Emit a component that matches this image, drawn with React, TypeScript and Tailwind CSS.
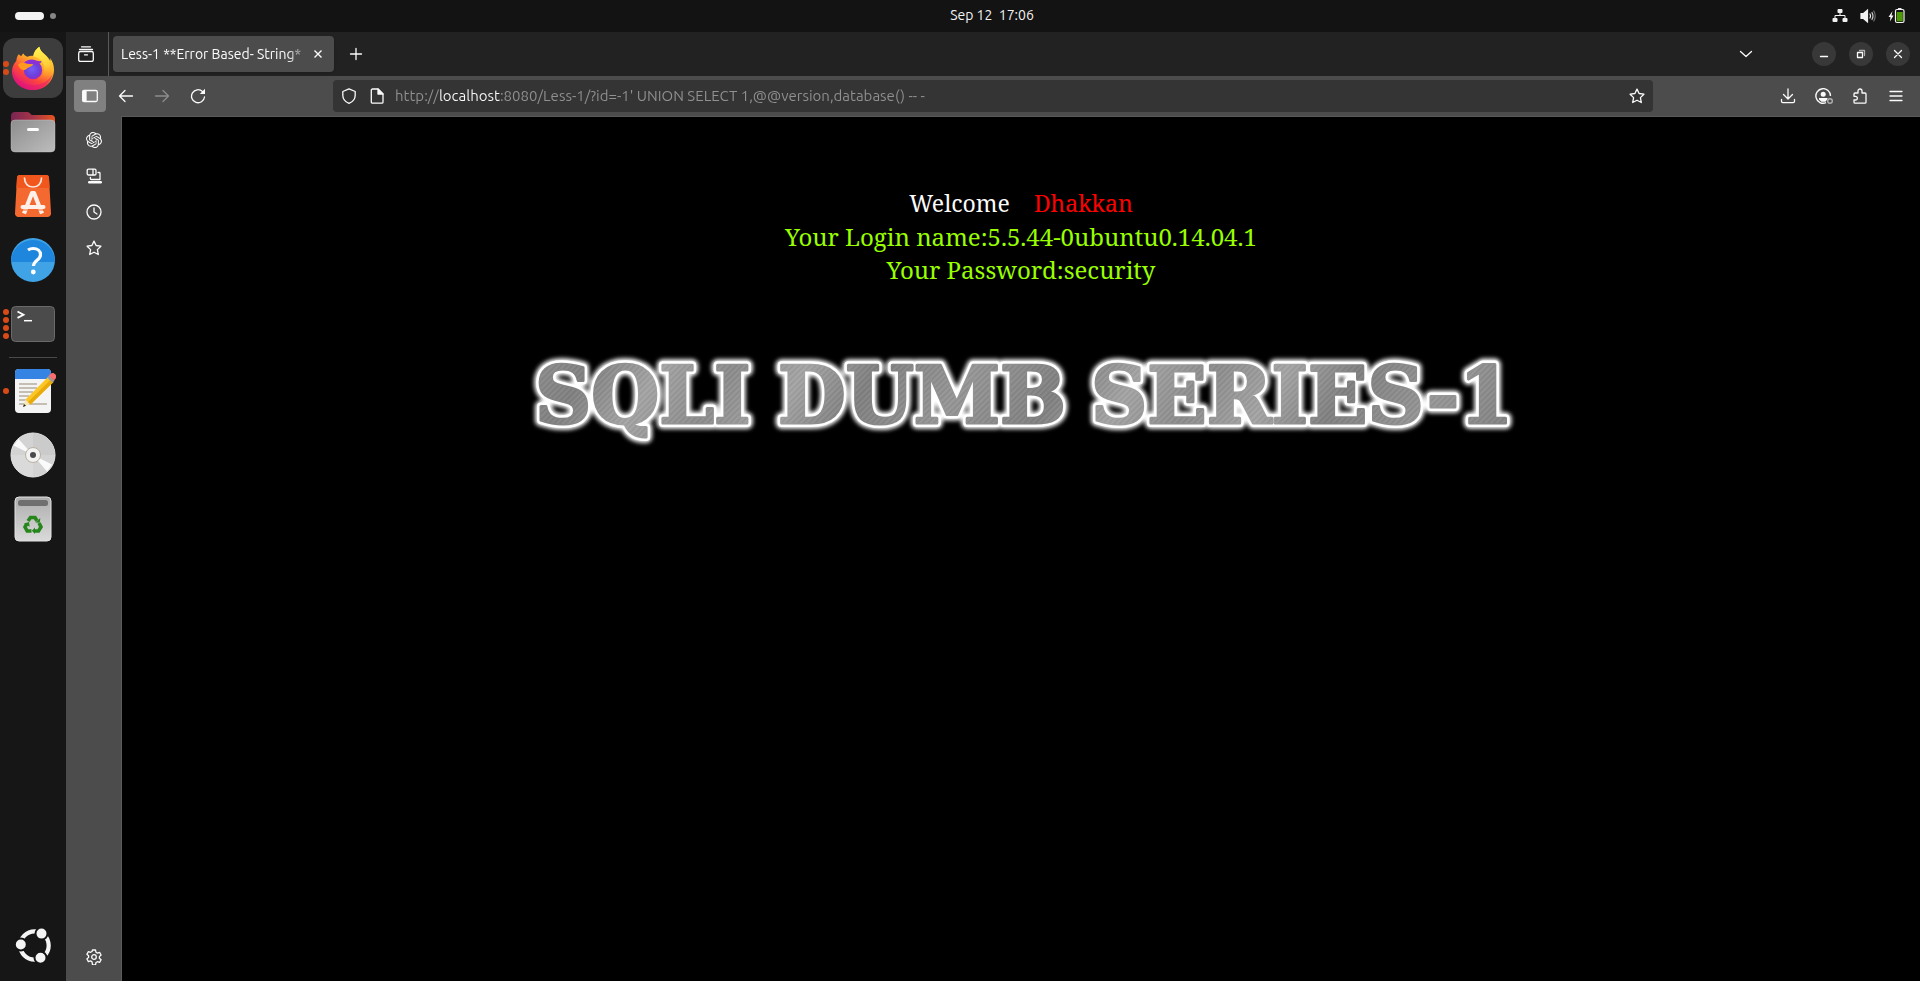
import type { ReactNode } from "react";
import { SiOpenai } from "react-icons/si";

const STAR = "M8 1.100l2.100 4.400 4.800.7-3.500 3.400.9 4.900L8 12.200l-4.300 2.300.9-4.900L1.100 6.200l4.800-.7z";

function Line({ children, width = 1.3 }: { children: ReactNode; width?: number }) {
  return (
    <svg
      viewBox="0 0 16 16"
      className="size-4 shrink-0"
      fill="none"
      stroke="currentColor"
      strokeWidth={width}
      strokeLinecap="round"
      strokeLinejoin="round"
      aria-hidden="true"
    >
      {children}
    </svg>
  );
}

function FirefoxIcon() {
  return (
    <svg viewBox="0 0 44 44" className="size-11" aria-hidden="true">
      <defs>
        <linearGradient id="ffBody" x1="0.85" y1="0.1" x2="0.3" y2="1">
          <stop offset="0" stopColor="#ffe43a" />
          <stop offset="0.35" stopColor="#ffab2a" />
          <stop offset="0.65" stopColor="#ff4b38" />
          <stop offset="1" stopColor="#e0127f" />
        </linearGradient>
        <linearGradient id="ffFlame" x1="0.4" y1="0" x2="0.5" y2="1">
          <stop offset="0" stopColor="#fff44f" />
          <stop offset="0.55" stopColor="#ffcf3a" />
          <stop offset="1" stopColor="#ff8a2a" stopOpacity="0" />
        </linearGradient>
        <radialGradient id="ffGlobe" cx="0.45" cy="0.45" r="0.6">
          <stop offset="0" stopColor="#7b5bf6" />
          <stop offset="0.6" stopColor="#6a42dc" />
          <stop offset="1" stopColor="#9a26c6" />
        </radialGradient>
      </defs>
      <path
        d="M28.3.8c-3 2-5.400 5.200-6 9.200-2-.4-4 0-5.800.8-1.800-.4-3.300-1.700-4-3.300-1 .5-1.700 1.500-2 2.600C9 9.500 8.300 9.200 8 8c-1.800 2-2.600 4.500-2.700 7C2.500 18 1 21.500 1 25c0 11 9.200 19 21 19s21-8.500 21-20.500c0-4.500-1.500-8.500-4-11.500.3 1 .4 2 .3 3-2.500-6-9.600-7.500-11-14.200z"
        fill="url(#ffBody)"
      />
      <path d="M28.300.8C25 3 22.600 6.500 22.300 10.500c5.500.5 9.700 4.500 10.700 9.500 1.200 7-3 13-9 15 8 .8 15.500-5.500 15.300-15C39 9 29.700 8.500 28.300.8z" fill="url(#ffFlame)" />
      <circle cx="22" cy="24" r="9.200" fill="url(#ffGlobe)" />
      <path d="M13 17c2.500-3.500 8-4.500 12-2.500 3 1 5 .8 5.500.6-.2 1.600-1.500 2.600-3 2.700 1.600.8 3 2.500 3.500 4.200-3-4-9-5-13.500-3z" fill="#8b2fd6" />
      <path d="M7 18.500c2-2 5-2.300 7.500-1.300 2 .8 5 .8 7.800 1-.4 1.500-3.300 2.500-5.300 3.600-1.600 1-2 2-3.500 2.300-3 .4-5.500-2-6.500-5.600z" fill="#ff9a1e" />
      <path d="M2 22c.5 9.500 9.500 17.500 20 17.200 8 0 16-4.500 19.500-11C39 37.500 31.500 44 22 44 10 44 .2 35 2 22z" fill="#e3137b" opacity="0.45" />
    </svg>
  );
}

function FilesIcon() {
  return (
    <svg viewBox="0 0 46 42" className="h-[42px] w-[46px]" aria-hidden="true">
      <defs>
        <linearGradient id="filesBack" x1="0" y1="0" x2="1" y2="0">
          <stop offset="0" stopColor="#7a2552" />
          <stop offset="0.5" stopColor="#a53548" />
          <stop offset="1" stopColor="#e95420" />
        </linearGradient>
        <linearGradient id="filesFront" x1="0" y1="0" x2="1" y2="1">
          <stop offset="0" stopColor="#8d8d8d" />
          <stop offset="1" stopColor="#bdbdbd" />
        </linearGradient>
      </defs>
      <path d="M1 5a4 4 0 0 1 4-4h12c2 0 3 1 4 2.500l1 .5h19a4 4 0 0 1 4 4v16H1z" fill="url(#filesBack)" />
      <rect x="1" y="9" width="44" height="32" rx="4" fill="url(#filesFront)" stroke="#cfcfcf" strokeOpacity="0.4" />
      <rect x="17" y="17" width="12" height="3" rx="1.500" fill="#fff" />
    </svg>
  );
}

function SoftwareIcon() {
  return (
    <svg viewBox="0 0 36 42" className="h-[42px] w-9" aria-hidden="true">
      <path d="M2 3a3 3 0 0 1 3-3h26a3 3 0 0 1 3 3l2 35a3.500 3.500 0 0 1-3.500 4h-29A3.500 3.500 0 0 1 0 38z" fill="#f4692f" />
      <path d="M2 3a3 3 0 0 1 3-3h26a3 3 0 0 1 3 3l.6 10H1.400z" fill="#f1561c" />
      <path d="M9.500 3c0 5.500 3.500 9 8.500 9s8.500-3.500 8.500-9" fill="none" stroke="#fbe6dc" strokeWidth="1.700" strokeLinecap="round" />
      <path d="M9 38.500L17 18h2l8 20.500" fill="none" stroke="#fff1ea" strokeWidth="4.200" strokeLinejoin="round" />
      <path d="M7.500 32h21" stroke="#fff1ea" strokeWidth="4" strokeLinecap="round" />
      <path d="M5 35h26" stroke="#f4692f" strokeWidth="1" />
    </svg>
  );
}

function HelpIcon() {
  return (
    <svg viewBox="0 0 44 44" className="size-11" aria-hidden="true">
      <circle cx="22" cy="22" r="22" fill="#3fa3e6" />
      <path d="M0 24a22 22 0 1 1 44 0z" fill="#1e86dc" />
      <path d="M17 12c1.500-1 3.300-1.500 5.200-1.500 4.300 0 7.300 2.300 7.300 6.200 0 5.500-7 5.800-7 11.300" fill="none" stroke="#fff" strokeWidth="3.200" />
      <circle cx="22.300" cy="34" r="2.400" fill="#fff" />
    </svg>
  );
}

function TerminalIcon() {
  return (
    <svg viewBox="0 0 44 36" className="h-9 w-11" aria-hidden="true">
      <rect x="0.500" y="0.500" width="43" height="35" rx="4" fill="#4b4b4b" stroke="#6a6a6a" />
      <path d="M6.500 5.500l6 3.200-6 3.200" fill="none" stroke="#fff" strokeWidth="1.800" />
      <path d="M13 14.700h8" stroke="#fff" strokeWidth="1.500" />
    </svg>
  );
}

function EditorIcon() {
  return (
    <svg viewBox="0 0 46 46" className="size-[46px]" aria-hidden="true">
      <rect x="5" y="1" width="36" height="44" rx="4" fill="#f4f4f4" />
      <path d="M5 11V5a4 4 0 0 1 4-4h28a4 4 0 0 1 4 4v6z" fill="#3584e4" />
      <path d="M9 16h18M9 20h18M9 24h14M9 28h10M9 32h8M9 36h28" stroke="#c4bfb2" strokeWidth="1.800" />
      <path d="M13 39l2.500-7.500 5 4.500z" fill="#f7e6b8" />
      <path d="M13 39l1-3 2 1.800z" fill="#222" />
      <path d="M15.500 31.500L38 9l5.500 5L20.500 36.500z" fill="#fcc624" />
      <path d="M18 34L40.800 11.600l2.700 2.400L20.500 36.500z" fill="#e9ab0c" />
      <path d="M37 9.500l2-2 5.500 5-2 2z" fill="#9a9a9a" />
      <path d="M38.800 7.700l1.200-1.500c2-2 4-1.500 5.500.3 1 1.500 1 3.300-.4 4.700l-1.200 1.300z" fill="#f66e6e" />
    </svg>
  );
}

function DiscIcon() {
  return (
    <svg viewBox="0 0 46 46" className="size-[46px]" aria-hidden="true">
      <circle cx="23" cy="23" r="22" fill="#d3d3d3" stroke="#e8e8e8" />
      <path d="M23 23V1a22 22 0 0 1 22 22z" fill="#cbcbcb" />
      <path d="M23 23v22A22 22 0 0 1 1 23z" fill="#dadada" />
      <path d="M23 23L3.500 13.500 8.500 7zM23 23l19 9.500-5 7z" fill="#fafafa" />
      <circle cx="23" cy="23" r="7.500" fill="#f2f2f2" stroke="#b9b1a0" />
      <circle cx="23" cy="23" r="3" fill="#4a4a4a" />
    </svg>
  );
}

function TrashIcon() {
  return (
    <svg viewBox="0 0 38 46" className="h-[46px] w-[38px]" aria-hidden="true">
      <defs>
        <linearGradient id="trashBody" x1="0" y1="0" x2="0" y2="1">
          <stop offset="0" stopColor="#adadad" />
          <stop offset="1" stopColor="#dadada" />
        </linearGradient>
      </defs>
      <rect x="1" y="1" width="36" height="44" rx="4" fill="url(#trashBody)" stroke="#e3e3e3" />
      <rect x="4" y="4" width="30" height="6" rx="2.500" fill="#6f6f6f" />
      <g fill="none" stroke="#26861c" strokeWidth="3.600">
        <path d="M14 25l2.500-3.500h4.500l2 3.200" />
        <path d="M25 27l2 4-2.500 4H20" />
        <path d="M17.500 35h-4.300L11 31l1.700-3.200" />
      </g>
      <path d="M21.300 26.500l4.500.3.500-4.800zM21 31.500v6.500l-3.200-3.200zM10 27.500l5-1.500.7 4.800z" fill="#26861c" />
    </svg>
  );
}

function UbuntuIcon() {
  return (
    <svg viewBox="0 0 36 36" className="size-9" aria-hidden="true">
      <circle cx="19.500" cy="18.500" r="14.200" fill="none" stroke="#f4f4f4" strokeWidth="4.200" />
      <g fill="#f4f4f4" stroke="#151515" strokeWidth="2">
        <circle cx="5.800" cy="17.500" r="6" />
        <circle cx="26.500" cy="6.600" r="6" />
        <circle cx="25.500" cy="30.700" r="6" />
      </g>
    </svg>
  );
}

function DockItem({ label, dots = 0, active = false, children }: { label: string; dots?: number; active?: boolean; children: ReactNode }) {
  return (
    <li className="relative flex h-16 items-center justify-center">
      {dots > 0 && (
        <span className="absolute inset-y-0 left-[3px] z-10 flex flex-col justify-center gap-0.5">
          {Array.from({ length: dots }, (_, i) => (
            <span key={i} className="size-1.5 rounded-full bg-[#d84a18]" />
          ))}
        </span>
      )}
      <button
        type="button"
        aria-label={label}
        className={active ? "flex size-15 items-center justify-center rounded-xl bg-[#3d3d3d]" : "flex size-15 items-center justify-center rounded-xl"}
      >
        {children}
      </button>
    </li>
  );
}

function ToolButton({ label, className = "", children }: { label: string; className?: string; children: ReactNode }) {
  return (
    <button type="button" aria-label={label} className={`flex size-8 shrink-0 items-center justify-center rounded ${className}`}>
      {children}
    </button>
  );
}

function TopBar() {
  return (
    <header className="grid h-8 shrink-0 grid-cols-[1fr_auto_1fr] items-center bg-[#131313] px-[15px] text-[#f2f2f2]">
      <button type="button" aria-label="Activities" className="flex items-center gap-1.5 justify-self-start">
        <span className="h-2 w-[29px] rounded-full bg-[#f4f4f4]" />
        <span className="size-1.5 rounded-full bg-[#868686]" />
      </button>
      <time className="ml-16 whitespace-pre pb-0.5 text-[14px] leading-4">Sep 12  17:06</time>
      <div className="flex items-center gap-3 justify-self-end">
        <svg viewBox="0 0 16 16" className="size-4" fill="currentColor" aria-hidden="true">
          <rect x="5.500" y="1" width="5" height="4" rx="1" />
          <rect x="0.500" y="10" width="5" height="4" rx="1" />
          <rect x="10.500" y="10" width="5" height="4" rx="1" />
          <path d="M8 4v4M3 11V7.500h10V11" fill="none" stroke="currentColor" strokeWidth="1" />
        </svg>
        <svg viewBox="0 0 16 16" className="size-4" fill="none" stroke="currentColor" strokeWidth="1.200" strokeLinecap="round" aria-hidden="true">
          <path d="M1 5.500h2.500L7.500 2v12L3.500 10.500H1z" fill="currentColor" />
          <path d="M10 6q1.200 2 0 4" />
          <path d="M12 4.500q2 3.500 0 7" opacity="0.8" />
          <path d="M13.800 3q2.800 5 0 10" opacity="0.4" />
        </svg>
        <svg viewBox="0 0 17 16" className="h-4 w-[17px]" aria-hidden="true">
          <path d="M4.500 3L.5 9h2L2 13.500 5.500 7.500H3.500z" fill="#f4f4f4" />
          <rect x="7.500" y="1.500" width="8.500" height="13" rx="1.500" fill="none" stroke="#f4f4f4" strokeWidth="1.200" />
          <path d="M10 .8h3.500" stroke="#f4f4f4" strokeWidth="1.500" />
          <rect x="8.800" y="4" width="6" height="9.300" fill="#4e9a06" />
        </svg>
      </div>
    </header>
  );
}

function Dock() {
  return (
    <nav aria-label="Dock" className="flex w-[66px] shrink-0 flex-col bg-[#161616] py-1">
      <ul>
        <DockItem label="Firefox" dots={2} active><FirefoxIcon /></DockItem>
        <DockItem label="Files"><FilesIcon /></DockItem>
        <DockItem label="App Center"><SoftwareIcon /></DockItem>
        <DockItem label="Help"><HelpIcon /></DockItem>
        <DockItem label="Terminal" dots={4}><TerminalIcon /></DockItem>
      </ul>
      <hr className="mx-[9px] my-px border-[#4a4a4a]" />
      <ul>
        <DockItem label="Text Editor" dots={1}><EditorIcon /></DockItem>
        <DockItem label="Disc"><DiscIcon /></DockItem>
        <DockItem label="Trash"><TrashIcon /></DockItem>
      </ul>
      <ul className="mt-auto">
        <DockItem label="Show Apps"><UbuntuIcon /></DockItem>
      </ul>
    </nav>
  );
}

function TabStrip() {
  return (
    <div className="flex h-11 shrink-0 items-center bg-[#222222] pr-2.5">
      <div className="flex h-full w-[43px] items-center justify-center border-r border-[#5a5a5a] pr-0.5">
        <ToolButton label="Recent tabs">
          <Line>
            <path d="M3.500.8h9M1.500 3.500h13" />
            <rect x="0.700" y="5.500" width="14.600" height="10" rx="1.800" />
            <path d="M6.500 8.800h3" />
          </Line>
        </ToolButton>
      </div>
      <div className="ml-1 flex h-9 w-[221px] items-center rounded bg-[#4c4c4c] px-2 shadow">
        <span className="min-w-0 flex-1 overflow-hidden whitespace-nowrap text-[14px] leading-5 [mask-image:linear-gradient(to_right,black_88%,transparent)]">
          Less-1 **Error Based- String*
        </span>
        <button type="button" aria-label="Close tab" className="flex w-4 justify-center">
          <svg viewBox="0 0 8 8" className="size-2" stroke="currentColor" strokeWidth="1.400" aria-hidden="true">
            <path d="M.5.5l7 7M7.500.5l-7 7" />
          </svg>
        </button>
      </div>
      <ToolButton label="New tab" className="ml-1.5">
        <Line><path d="M8 2.500v11M2.500 8h11" /></Line>
      </ToolButton>
      <ToolButton label="List all tabs" className="ml-auto mr-[50px]">
        <Line><path d="M2.500 5.500L8 10.500l5.500-5" /></Line>
      </ToolButton>
      <div className="flex gap-[13px]">
        <button type="button" aria-label="Minimize" className="flex size-6 items-center justify-center rounded-full bg-[#383838]">
          <Line><path d="M4.500 10.500h7" /></Line>
        </button>
        <button type="button" aria-label="Restore" className="flex size-6 items-center justify-center rounded-full bg-[#383838]">
          <Line>
            <path d="M4.500 6.500h5v5h-5z" />
            <path d="M6.500 4.500h5v5" opacity="0.6" />
          </Line>
        </button>
        <button type="button" aria-label="Close" className="flex size-6 items-center justify-center rounded-full bg-[#383838]">
          <Line><path d="M4.500 4.500l7 7M11.500 4.500l-7 7" /></Line>
        </button>
      </div>
    </div>
  );
}

function Toolbar() {
  return (
    <div className="flex h-10 shrink-0 items-center bg-[#4c4c4c] px-2">
      <ToolButton label="Show sidebar" className="bg-[#808080]">
        <Line>
          <rect x="0.700" y="2.500" width="14.600" height="11" rx="1.500" />
          <path d="M1 3h3v10H1z" fill="currentColor" />
        </Line>
      </ToolButton>
      <ToolButton label="Back" className="ml-1">
        <Line><path d="M14.500 8H1.500M7 2.500L1.500 8 7 13.500" /></Line>
      </ToolButton>
      <ToolButton label="Forward" className="ml-1 text-[#8c8c8c]">
        <Line><path d="M1.500 8h13M9 2.500L14.500 8 9 13.500" /></Line>
      </ToolButton>
      <ToolButton label="Reload" className="ml-1">
        <Line>
          <path d="M14.500 9A6.500 6.500 0 1 1 12.500 3.500" />
          <path d="M15 .8v5.200H9.800z" fill="currentColor" stroke="none" />
        </Line>
      </ToolButton>
      <div className="mx-[119px] flex h-8 min-w-0 flex-1 items-center rounded bg-[#343434]">
        <ToolButton label="Tracking protection">
          <Line><path d="M8 .8l6.200 2.700v3.700c0 4-2.500 6.600-6.200 8.200-3.700-1.600-6.200-4.200-6.200-8.200V3.500z" /></Line>
        </ToolButton>
        <ToolButton label="Site information" className="-ml-1">
          <Line>
            <path d="M3.500 1h5.500l5 5v8a1.200 1.200 0 0 1-1.200 1.200H3.500A1.200 1.200 0 0 1 2.300 14V2.200A1.200 1.200 0 0 1 3.500 1z" />
            <path d="M9 1v5h5z" fill="currentColor" />
          </Line>
        </ToolButton>
        <input
          type="text"
          aria-label="Address"
          defaultValue="http://localhost:8080/Less-1/?id=-1' UNION SELECT 1,@@version,database() -- -"
          className="ml-0.5 h-8 min-w-0 flex-1 bg-[linear-gradient(to_right,#919191_44px,#fbfbfb_44px,#fbfbfb_106px,#919191_106px)] bg-clip-text pb-0.5 text-[15px] text-transparent outline-none"
        />
        <ToolButton label="Bookmark this page">
          <Line><path d={STAR} /></Line>
        </ToolButton>
      </div>
      <div className="flex gap-1">
        <ToolButton label="Downloads">
          <Line><path d="M8 1v9.500M3.500 6.500L8 11l4.500-4.500M1.500 11.500v1.800c0 .8.500 1.300 1.300 1.300h10.400c.8 0 1.300-.5 1.300-1.300v-1.800" /></Line>
        </ToolButton>
        <ToolButton label="Account">
          <svg viewBox="0 0 18 16" className="h-4 w-[18px]" fill="none" stroke="currentColor" strokeWidth="1.400" aria-hidden="true">
            <path d="M15.500 8A7.300 7.300 0 1 0 11 14.700" />
            <circle cx="8.200" cy="6.200" r="2.500" fill="currentColor" stroke="none" />
            <path d="M4 10h8.500v1l-2 2.700H6.500L4 11.500z" fill="currentColor" stroke="none" />
            <circle cx="15" cy="13" r="2.300" stroke="#b0b0b0" />
          </svg>
        </ToolButton>
        <ToolButton label="Extensions">
          <Line>
            <path d="M6 5V3a2 2 0 0 1 4 0v2h3a1 1 0 0 1 1 1v8.200a1 1 0 0 1-1 1H3a1 1 0 0 1-1-1V12h1.500a1.800 1.800 0 0 0 0-3.700H2V6a1 1 0 0 1 1-1z" />
          </Line>
        </ToolButton>
        <ToolButton label="Menu">
          <Line><path d="M2 3.500h12M2 8h12M2 12.500h12" /></Line>
        </ToolButton>
      </div>
    </div>
  );
}

function Sidebar() {
  return (
    <nav aria-label="Sidebar" className="flex w-14 shrink-0 flex-col items-center gap-1 border-r border-[#5a5a5a] bg-[#4c4c4c] py-2">
      <ToolButton label="ChatGPT"><SiOpenai className="size-4" /></ToolButton>
      <ToolButton label="Synced tabs">
        <Line>
          <rect x="1.200" y="1.200" width="8.800" height="5.800" rx="1.200" />
          <path d="M7 1.500v5.300" />
          <path d="M12 4.500h1.200c.5 0 .8.300.8.800v6.200H5.200c-.5 0-.8-.3-.8-.8V9.500" />
          <path d="M3.200 14.300h11.600" strokeWidth="2.400" />
        </Line>
      </ToolButton>
      <ToolButton label="History">
        <Line>
          <circle cx="8" cy="8" r="7" />
          <path d="M8 4v4l3 2" />
        </Line>
      </ToolButton>
      <ToolButton label="Bookmarks"><Line><path d={STAR} /></Line></ToolButton>
      <ToolButton label="Customize sidebar" className="mt-auto">
        <Line>
          <path d="M6.500 1h3l.5 2.300 1.400.8 2.200-.7 1.500 2.600-1.700 1.600v1.600l1.700 1.600-1.500 2.600-2.200-.7-1.400.8-.5 2.300h-3L6 12.700l-1.400-.8-2.200.7L.9 10l1.700-1.600V6.800L.9 5.200l1.500-2.600 2.200.7L6 2.500z" />
          <circle cx="8" cy="8" r="2.300" />
        </Line>
      </ToolButton>
    </nav>
  );
}

function Banner() {
  const words = (
    <>
      <text x="24" y="85">SQLI</text>
      <text x="267" y="85">DUMB</text>
      <text x="580" y="85">SERIES-1</text>
    </>
  );
  return (
    <svg viewBox="0 0 1020 120" className="w-[1020px] max-w-full" fontFamily="DejaVu Serif, serif" fontWeight="700" fontSize="78" strokeLinejoin="round" role="img" aria-label="SQLI DUMB SERIES-1">
      <defs>
        <linearGradient id="steel" gradientUnits="userSpaceOnUse" x1="0" y1="0" x2="170" y2="110" spreadMethod="reflect">
          <stop offset="0" stopColor="#969696" />
          <stop offset="0.4" stopColor="#808080" />
          <stop offset="0.7" stopColor="#a4a4a4" />
          <stop offset="1" stopColor="#8c8c8c" />
        </linearGradient>
        <pattern id="brushed" width="4" height="4" patternUnits="userSpaceOnUse" patternTransform="rotate(45)">
          <path d="M1 0v4" stroke="#fff" strokeOpacity="0.1" />
          <path d="M3 0v4" stroke="#000" strokeOpacity="0.08" />
        </pattern>
        <filter id="soft" x="-5%" y="-30%" width="110%" height="160%">
          <feGaussianBlur stdDeviation="2" />
        </filter>
      </defs>
      <g stroke="#fff" strokeWidth="12" fill="#fff" filter="url(#soft)" aria-hidden="true">{words}</g>
      <g stroke="#fff" strokeWidth="8" fill="#fff" aria-hidden="true">{words}</g>
      <g fill="url(#steel)" stroke="url(#steel)" strokeWidth="3">{words}</g>
      <g fill="url(#brushed)" aria-hidden="true">{words}</g>
    </svg>
  );
}

export default function App() {
  return (
    <div className="flex h-screen flex-col overflow-hidden bg-black font-['Ubuntu','Noto_Sans',sans-serif] text-[#fbfbfb]">
      <TopBar />
      <div className="flex min-h-0 flex-1">
        <Dock />
        <div className="flex min-w-0 flex-1 flex-col">
          <TabStrip />
          <Toolbar />
          <div className="flex min-h-0 flex-1">
            <Sidebar />
            <main className="flex min-w-0 flex-1 flex-col items-center border-t border-[#5a5a5a] bg-black pt-[70px] font-['Noto_Serif','DejaVu_Serif',serif] text-[24px] leading-[33px]">
              <p className="text-[23px]">
                Welcome <span className="ml-[18px] text-[#ff0000]">Dhakkan</span>
              </p>
              <p className="text-[#99ff00]">Your Login name:5.5.44-0ubuntu0.14.04.1</p>
              <p className="text-[#99ff00]">Your Password:security</p>
              <h1 className="mt-[52px]"><Banner /></h1>
            </main>
          </div>
        </div>
      </div>
    </div>
  );
}
